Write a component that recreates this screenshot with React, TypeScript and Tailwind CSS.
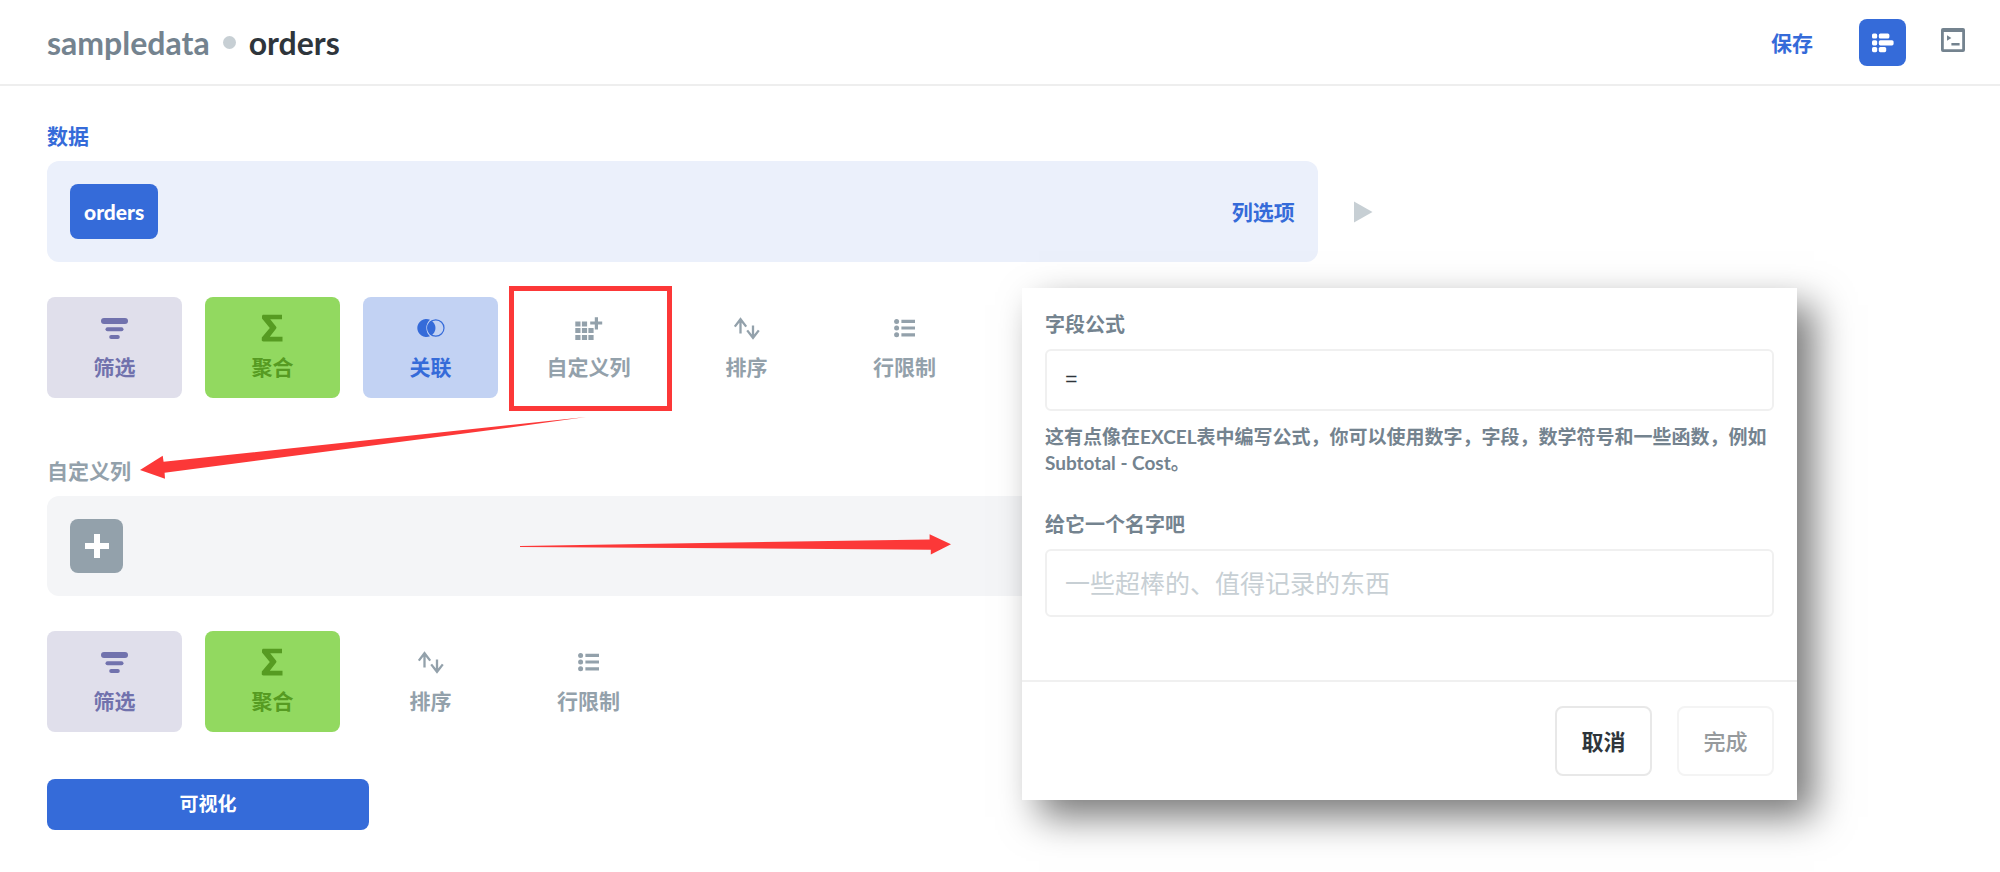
import React, { useState } from 'react';
import { clsx } from 'clsx';

type Tone = 'filter' | 'summarize' | 'join' | 'plain';

interface Action {
  id: string;
  label: string;
  tone: Tone;
  icon: React.ReactNode;
  highlighted?: boolean;
}

const FilterIcon = () => (
  <svg width="28" height="28" viewBox="0 0 28 28" fill="currentColor">
    <rect x="0" y="4" width="27" height="6" rx="3" />
    <rect x="4.5" y="13.3" width="18" height="4" rx="2" />
    <rect x="8.2" y="21" width="10.6" height="4" rx="2" />
  </svg>
);

const SumIcon = () => (
  <svg width="28" height="28" viewBox="0 0 28 28" fill="currentColor">
    <path d="M4.4 .8H23V5.2H11.2L17 12.4a1.8 1.8 0 0 1 0 2.4L10.8 22.8H23.5V27.4H4.6C3 27.4 2.4 26.3 2.8 25.2V23.6L10.8 14 3 4.6V2.4C3 1.4 3.6 .8 4.4 .8Z" />
  </svg>
);

const JoinIcon = () => (
  <svg width="28" height="28" viewBox="0 0 28 28" fill="currentColor">
    <path d="M13 5.8A9 9 0 1 0 13 22.2 11 11 0 0 1 13 5.8Z" />
    <path d="M14.3 6.4a9 9 0 0 1 0 15.2 10 10 0 0 1 0-15.2Z" />
    <circle cx="18.8" cy="14" r="8.2" fill="none" stroke="currentColor" strokeWidth="1.2" />
  </svg>
);

const AddColumnIcon = () => (
  <svg width="28" height="28" viewBox="0 0 28 28" fill="currentColor">
    <path d="M.3 7.4h5.2v5H.3zM6.9 7.4h5.2v5H6.9zM.3 14.1h5.2v5H.3zM6.9 14.1h5.2v5H6.9zM13.4 14.1h5.2v5h-5.2zM.3 20.9h5.2v5H.3zM6.9 20.9h5.2v5H6.9zM13.4 20.9h5.2v5h-5.2z" />
    <path d="M19.8 3.2h3.2v4.2h4.2v3.2H23v4.8h-3.2v-4.8h-4.6V7.4h4.6z" />
  </svg>
);

const SortIcon = () => (
  <svg width="28" height="28" viewBox="0 0 28 28" fill="none" stroke="currentColor" strokeWidth="2.3">
    <path d="M7.5 19.6V5.6M1.8 12.6 7.5 5.2l5.7 7.4M20 11.4v12.4M14.2 16.4l5.8 7.4 5.8-7.4" />
  </svg>
);

const ListIcon = () => (
  <svg width="28" height="28" viewBox="0 0 28 28" fill="currentColor">
    <circle cx="5.6" cy="7.4" r="2.5" />
    <circle cx="5.6" cy="14" r="2.5" />
    <circle cx="5.6" cy="20.8" r="2.5" />
    <path d="M10.4 5.8h13.6V9H10.4zM10.4 12.4h13.6v3.2H10.4zM10.4 19.2h13.6v3.2H10.4z" />
  </svg>
);

const NotebookIcon = () => (
  <svg width="22" height="20" viewBox="0 0 22 20" fill="currentColor">
    <rect x="0" y="0.4" width="5.2" height="5.2" rx="1.6" />
    <rect x="0" y="7.2" width="5.2" height="5.2" rx="1.6" />
    <rect x="0" y="14" width="5.2" height="5.2" rx="1.6" />
    <rect x="6.8" y="0.4" width="10.6" height="5.2" rx="1.6" />
    <rect x="6.8" y="7.2" width="14.8" height="5.2" rx="1.6" />
    <rect x="6.8" y="14" width="7.4" height="5.2" rx="1.6" />
  </svg>
);

const ConsoleIcon = () => (
  <svg width="24" height="24" viewBox="0 0 24 24" fill="currentColor">
    <path fillRule="evenodd" d="M2 0h20a2 2 0 0 1 2 2v20a2 2 0 0 1-2 2H2a2 2 0 0 1-2-2V2a2 2 0 0 1 2-2Zm.8 4v17.2h18.4V4H2.8Z" />
    <path d="M6 7.2 10.4 10 6 12.8zM10.4 15h8.2v2.4h-8.2z" />
  </svg>
);

const SOURCE_ACTIONS: Action[] = [
  { id: 'filter', label: '筛选', tone: 'filter', icon: <FilterIcon /> },
  { id: 'summarize', label: '聚合', tone: 'summarize', icon: <SumIcon /> },
  { id: 'join', label: '关联', tone: 'join', icon: <JoinIcon /> },
  { id: 'custom', label: '自定义列', tone: 'plain', icon: <AddColumnIcon />, highlighted: true },
  { id: 'sort', label: '排序', tone: 'plain', icon: <SortIcon /> },
  { id: 'limit', label: '行限制', tone: 'plain', icon: <ListIcon /> },
];

const COLUMN_ACTIONS: Action[] = [
  { id: 'filter', label: '筛选', tone: 'filter', icon: <FilterIcon /> },
  { id: 'summarize', label: '聚合', tone: 'summarize', icon: <SumIcon /> },
  { id: 'sort', label: '排序', tone: 'plain', icon: <SortIcon /> },
  { id: 'limit', label: '行限制', tone: 'plain', icon: <ListIcon /> },
];

const TONES: Record<Tone, string> = {
  filter: 'bg-[#e0dfeb] text-[#7172ad]',
  summarize: 'bg-[#92d960] text-[#569b22]',
  join: 'bg-[#c2d2f3] text-[#356bd9]',
  plain: 'text-[#93a1ab]',
};

const ActionRow: React.FC<{ actions: Action[] }> = ({ actions }) => (
  <div className="flex gap-[23px]">
    {actions.map((action) => (
      <div key={action.id} className="relative">
        <button
          className={clsx(
            'flex w-[135px] min-h-[101px] flex-col items-center gap-[11px] rounded-lg pt-[17px] text-[21px] leading-7 font-bold',
            TONES[action.tone]
          )}
        >
          {action.icon}
          {action.label}
        </button>
        {action.highlighted && (
          <div className="pointer-events-none absolute -top-[11px] -right-4 -bottom-[13px] -left-3 border-5 border-[#fc3838]" />
        )}
      </div>
    ))}
  </div>
);

const FormulaPopover: React.FC = () => {
  const [formula, setFormula] = useState('=');
  const [name, setName] = useState('');

  return (
    <div className="absolute top-[288px] left-[1022px] w-[775px] bg-white font-bold text-[#74838f] shadow-[17px_17px_36px_rgba(0,0,0,0.53)]">
      <div className="px-[23px] pt-6 pb-[63px]">
        <label htmlFor="formula" className="block text-[20px] leading-6">字段公式</label>
        <input
          id="formula"
          value={formula}
          onChange={(e) => setFormula(e.target.value)}
          className="mt-[13px] block h-[62px] w-full rounded-md border-2 border-[#f0f0f0] px-[18px] font-['Liberation_Mono','Noto_Sans_CJK_SC',monospace] text-[21px] font-normal text-[#2e353b] outline-none"
        />
        <p className="mt-[13px] text-[19px] leading-[26px]">
          这有点像在EXCEL表中编写公式，你可以使用数字，字段，数学符号和一些函数，例如 Subtotal - Cost。
        </p>
        <label htmlFor="column-name" className="mt-9 block text-[20px] leading-6">给它一个名字吧</label>
        <input
          id="column-name"
          value={name}
          placeholder="一些超棒的、值得记录的东西"
          onChange={(e) => setName(e.target.value)}
          className="mt-[13px] block h-[68px] w-full rounded-md border-2 border-[#f0f0f0] px-[18px] text-[25px] font-normal text-[#2e353b] outline-none placeholder:text-[#c7cfd4]"
        />
      </div>
      <div className="flex justify-end gap-[25px] border-t-2 border-[#f0f0f0] px-[23px] py-6 text-[22px]">
        <button className="h-[70px] w-[97px] rounded-lg border-2 border-[#e8e8e8] text-[#2e353b]">取消</button>
        <button disabled className="h-[70px] w-[97px] rounded-lg border-2 border-[#f4f4f4] font-medium text-[#969a9d]">完成</button>
      </div>
    </div>
  );
};

export default function App() {
  return (
    <div className="relative min-h-screen bg-white pb-10 font-['Lato','Noto_Sans_CJK_SC',sans-serif] text-[#2e353b]">
      <header className="flex items-center justify-between border-b-2 border-[#eeeeee] pt-[19px] pr-[35px] pb-[18px] pl-[47px]">
        <h1 className="flex items-center gap-[13px] text-[32px] leading-[38px] font-bold">
          <a href="#sampledata" className="text-[#74838f]">sampledata</a>
          <span className="size-[13px] rounded-full bg-[#c7cfd4]" />
          <span>orders</span>
        </h1>
        <div className="flex items-center">
          <button className="text-[21px] leading-7 font-bold text-[#356bd9]">保存</button>
          <button aria-label="Notebook" className="ml-[46px] flex size-[47px] items-center justify-center rounded-lg bg-[#356bd9] text-white">
            <NotebookIcon />
          </button>
          <button aria-label="Console" className="mb-1.5 ml-[35px] text-[#74838f]">
            <ConsoleIcon />
          </button>
        </div>
      </header>

      <main className="px-[47px] pt-[38px]">
        {/* Source table */}
        <section>
          <h2 className="mb-[13px] text-[21px] leading-6 font-bold text-[#356bd9]">数据</h2>
          <div className="flex items-center">
            <div className="flex w-2/3 items-center justify-between rounded-xl bg-[#ebf0fb] p-[23px]">
              <button className="h-[55px] rounded-lg bg-[#356bd9] px-3.5 text-[21px] font-black text-white">orders</button>
              <button className="text-[21px] leading-7 font-bold text-[#356bd9]">列选项</button>
            </div>
            <button aria-label="Preview" className="ml-9 text-[#c7cfd4]">
              <svg width="19" height="22" viewBox="0 0 19 22" fill="currentColor">
                <path d="M0 .5 18.5 11 0 21.5z" />
              </svg>
            </button>
          </div>
          <div className="mt-[35px]">
            <ActionRow actions={SOURCE_ACTIONS} />
          </div>
        </section>

        {/* Custom column step */}
        <section className="mt-[61px]">
          <h2 className="mb-[13px] text-[21px] leading-6 font-bold text-[#93a1ab]">自定义列</h2>
          <div className="w-2/3 rounded-xl bg-[#f4f5f7] p-[23px]">
            <button aria-label="Add column" className="flex h-[54px] w-[53px] items-center justify-center rounded-lg bg-[#93a1ab] text-white">
              <svg width="24" height="24" viewBox="0 0 24 24" fill="currentColor">
                <path d="M9 0h6v9h9v6h-9v9H9v-9H0V9h9z" />
              </svg>
            </button>
          </div>
          <div className="mt-[35px]">
            <ActionRow actions={COLUMN_ACTIONS} />
          </div>
        </section>

        <button className="mt-[47px] h-[51px] w-[322px] rounded-lg bg-[#356bd9] text-[19px] font-bold text-white">可视化</button>
      </main>

      {/* Annotation arrows */}
      <svg className="pointer-events-none absolute top-0 left-0" width="1000" height="600" viewBox="0 0 1000 600" fill="#fc3838">
        <path d="M140 470 162.7 455.7 163.6 461.7 586 417 510 427.6 164.6 472.7 165 478.7z" />
        <path d="M951 544.3 929.6 534.3V539.5L520 545.9V547L930.8 549.7V554.5z" />
      </svg>

      <FormulaPopover />
    </div>
  );
}
